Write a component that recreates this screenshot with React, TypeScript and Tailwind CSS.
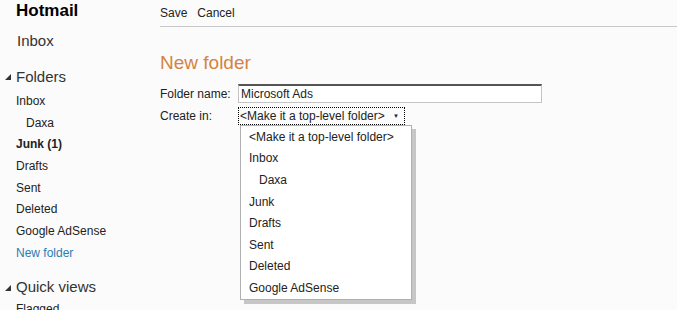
import { ReactNode } from 'react';

const font = { fontFamily: '"Liberation Sans", Arial, sans-serif' };

const Triangle = () => (
    <svg width="6" height="6" viewBox="0 0 6 6" className="mr-[5px]">
        <polygon points="6,0 6,6 0,6" fill="#333" />
    </svg>
);

const SideItem = ({ children, indent, bold, link }: { children: ReactNode; indent?: boolean; bold?: boolean; link?: boolean }) => (
    <div
        className={`h-[21.7px] flex items-center text-[12px] ${indent ? 'pl-[26px]' : 'pl-4'} ${bold ? 'font-bold' : ''} ${link ? 'text-[#2a7bb3]' : 'text-[#222]'}`}
    >
        {children}
    </div>
);

const folders = ['Inbox', 'Daxa', 'Junk (1)', 'Drafts', 'Sent', 'Deleted', 'Google AdSense', 'New folder'];
const options = ['<Make it a top-level folder>', 'Inbox', 'Daxa', 'Junk', 'Drafts', 'Sent', 'Deleted', 'Google AdSense'];

export default function App() {
    return (
        <div className="w-[677px] h-[310px] overflow-hidden bg-[#fbfbfb] flex text-[#222]" style={font}>
            {/* barre latérale */}
            <aside className="w-[160px] shrink-0">
                <div className="h-[22px] flex items-center pl-4 text-[17px] font-bold text-black">Hotmail</div>
                <div className="h-[22px] mt-[8px] flex items-center pl-[17px] text-[15px] text-[#333]">Inbox</div>
                <div className="h-[22px] mt-[14px] flex items-center pl-[5px] text-[15px] text-[#333]">
                    <Triangle />
                    Folders
                </div>
                <div className="mt-[2px]">
                    {folders.map(f => (
                        <SideItem key={f} indent={f === 'Daxa'} bold={f === 'Junk (1)'} link={f === 'New folder'}>
                            {f}
                        </SideItem>
                    ))}
                </div>
                <div className="h-[22px] mt-[13px] flex items-center pl-[5px] text-[15px] text-[#333]">
                    <Triangle />
                    Quick views
                </div>
                <SideItem>Flagged</SideItem>
            </aside>

            {/* contenu principal */}
            <main className="flex-1">
                <div className="h-[27px] flex items-center gap-[10px] text-[12px] border-b border-[#c8c8c8]">
                    <span>Save</span>
                    <span>Cancel</span>
                </div>
                <h1 className="mt-[23px] h-[26px] flex items-center text-[19px] text-[#d5833f]">New folder</h1>
                <div className="mt-[8px] flex items-center text-[12px]">
                    <span className="w-[78px]">Folder name:</span>
                    <div className="w-[304px] h-[19px] bg-white border border-[#c4c4c4] border-t-2 border-t-[#555] flex items-center pl-[2px]">
                        Microsoft Ads
                    </div>
                </div>
                <div className="mt-[4px] flex items-center text-[12px]">
                    <span className="w-[78px]">Create in:</span>
                    <div className="relative">
                        <div className="w-[167px] h-[18px] border border-dotted border-black flex items-center pl-[1px]">
                            &lt;Make it a top-level folder&gt;
                            <span className="ml-auto mr-[5px] text-[6px] leading-none">▼</span>
                        </div>
                        <div className="absolute left-[2px] top-[18px] w-[172px] bg-white border border-[#b0b0b0] shadow-[4px_4px_0_#c6c6c6]">
                            {options.map(o => (
                                <div key={o} className={`h-[21.6px] flex items-center ${o === 'Daxa' ? 'pl-[18px]' : 'pl-[8px]'}`}>
                                    {o}
                                </div>
                            ))}
                        </div>
                    </div>
                </div>
            </main>
        </div>
    );
}
